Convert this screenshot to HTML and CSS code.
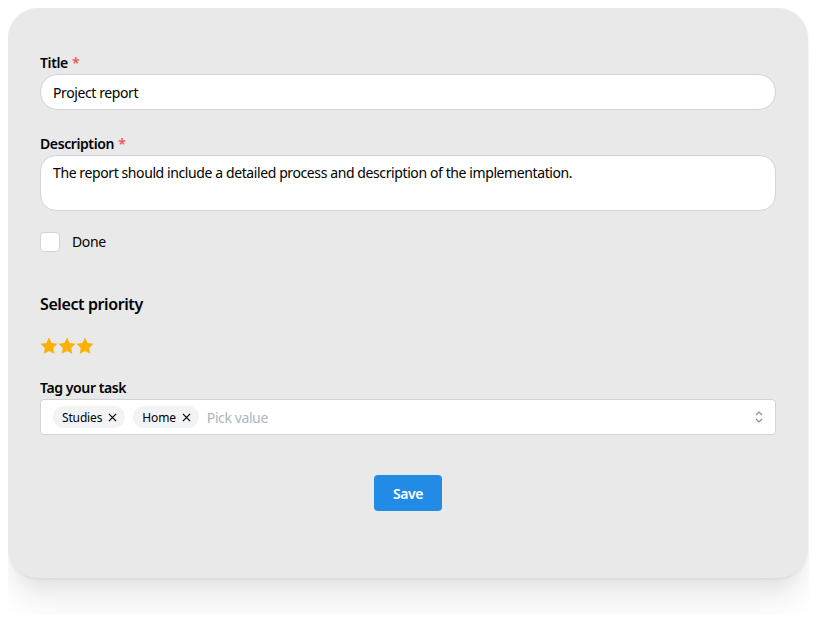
FILE: index.html
```html
<!DOCTYPE html>
<html lang="en">
<head>
<meta charset="utf-8">
<title>Task form</title>
<link rel="stylesheet" href="styles.css">
</head>
<body>
<form class="card">
  <div class="field">
    <label class="label">Title <span class="req">*</span></label>
    <div class="input pill">Project report</div>
  </div>
  <div class="field">
    <label class="label">Description <span class="req">*</span></label>
    <div class="input area">The report should include a detailed process and description of the implementation.</div>
  </div>
  <div class="check-row">
    <span class="checkbox"></span>
    <span class="check-label">Done</span>
  </div>
  <h3 class="heading">Select priority</h3>
  <div class="stars">
    <svg class="star" viewBox="0 0 24 24"><path d="M12 0.8l3.5 7.2 7.8 1.1-5.7 5.5 1.4 7.8L12 18.7l-7 3.7 1.4-7.8L0.7 9.1l7.8-1.1z"/></svg>
    <svg class="star" viewBox="0 0 24 24"><path d="M12 0.8l3.5 7.2 7.8 1.1-5.7 5.5 1.4 7.8L12 18.7l-7 3.7 1.4-7.8L0.7 9.1l7.8-1.1z"/></svg>
    <svg class="star" viewBox="0 0 24 24"><path d="M12 0.8l3.5 7.2 7.8 1.1-5.7 5.5 1.4 7.8L12 18.7l-7 3.7 1.4-7.8L0.7 9.1l7.8-1.1z"/></svg>
  </div>
  <div class="field tags-field">
    <label class="label">Tag your task</label>
    <div class="multi">
      <span class="tag">Studies <svg class="x" viewBox="0 0 10 10"><path d="M1 1l8 8M9 1l-8 8"/></svg></span>
      <span class="tag">Home <svg class="x" viewBox="0 0 10 10"><path d="M1 1l8 8M9 1l-8 8"/></svg></span>
      <span class="placeholder">Pick value</span>
      <svg class="chev" viewBox="0 0 10 16"><path d="M2 6l3-3 3 3M2 10l3 3 3-3"/></svg>
    </div>
  </div>
  <div class="actions">
    <button type="button" class="save">Save</button>
  </div>
</form>
</body>
</html>
```
FILE: styles.css
```css
html { background: #ffffff; height: 100%; }
body {
  margin: 8px;
  min-height: calc(100% - 16px);
  font-family: "Noto Sans", "Open Sans", Arial, sans-serif;
  letter-spacing: -0.4px;
  color: #000;
}
.card {
  width: 800px;
  box-sizing: border-box;
  background: #e9e9e9;
  border-radius: 30px;
  padding: 44px 32px 67px;
  box-shadow: 0 1px 3px rgba(0,0,0,0.06), 0 30px 32px -6px rgba(0,0,0,0.07), 0 14px 16px -6px rgba(0,0,0,0.05);
  display: flex;
  flex-direction: column;
}
.field { display: flex; flex-direction: column; }
.field + .field { margin-top: 23px; }
.label {
  font-size: 14px;
  font-weight: 600;
  line-height: 22px;
  color: #000;
}
.req { color: #fa5252; margin-left: 1px; }
.input {
  background: #fff;
  border: 1px solid #ced4da;
  box-sizing: border-box;
  font-size: 14px;
  color: #000;
  padding: 0 12px;
}
.pill { height: 36px; border-radius: 18px; line-height: 36px; }
.area { height: 56px; border-radius: 16px; padding-top: 6px; line-height: 22px; }
.check-row {
  display: flex;
  align-items: center;
  margin-top: 21px;
  height: 20px;
}
.checkbox {
  width: 20px; height: 20px;
  box-sizing: border-box;
  background: #fff;
  border: 1px solid #ced4da;
  border-radius: 4px;
}
.check-label { font-size: 14px; margin-left: 12px; line-height: 18px; }
.heading {
  font-size: 16px;
  font-weight: 600;
  line-height: 24px;
  margin: 40px 0 0;
}
.stars { display: flex; margin-top: 21px; height: 18px; }
.star { width: 18px; height: 18px; fill: #fab005; }
.tags-field { margin-top: 22px; }
.multi {
  height: 36px;
  box-sizing: border-box;
  background: #fff;
  border: 1px solid #ced4da;
  border-radius: 4px;
  display: flex;
  align-items: center;
  padding: 0 12px;
  gap: 8px;
}
.tag {
  display: inline-flex;
  align-items: center;
  height: 22px;
  border-radius: 11px;
  background: #f1f3f5;
  font-size: 12px;
  letter-spacing: -0.15px;
  padding: 0 8px 0 9px;
  gap: 6px;
}
.x { width: 9px; height: 9px; stroke: #000; stroke-width: 1.3; fill: none; }
.placeholder { color: #adb5bd; font-size: 14px; flex: 1; }
.chev { width: 10px; height: 16px; stroke: #868e96; stroke-width: 1.2; fill: none; margin-right: -1px; }
.actions { display: flex; justify-content: center; margin-top: 40px; }
.save {
  width: 68px; height: 36px;
  border: none;
  border-radius: 4px;
  background: #228be6;
  color: #fff;
  font-family: inherit;
  letter-spacing: inherit;
  font-size: 14px;
  font-weight: 600;
}
```
